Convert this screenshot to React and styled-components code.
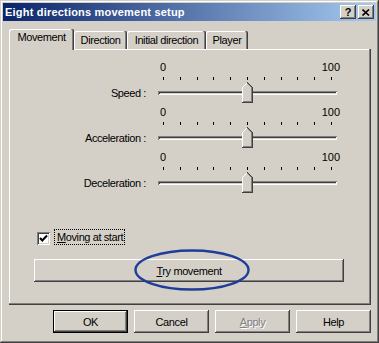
import styled, { createGlobalStyle } from "styled-components";

const face = "#d4d0c8";

const Global = createGlobalStyle`
  html, body { margin: 0; padding: 0; background: ${face}; }
  body {
    font-family: "Liberation Sans", Arial, sans-serif;
    font-size: 11px;
    letter-spacing: -0.4px;
    color: #000;
  }
`;

const Window = styled.div`
  position: relative;
  width: 379px;
  height: 343px;
  box-sizing: border-box;
  padding: 3px;
  background: ${face};
  box-shadow: inset -1px -1px #404040, inset 1px 1px ${face},
    inset -2px -2px #808080, inset 2px 2px #fff;
`;

const TitleBar = styled.div`
  display: flex;
  align-items: center;
  height: 18px;
  padding: 0 2px 0 2px;
  background: linear-gradient(to right, #0a246a, #a6caf0);
`;

const Title = styled.div`
  flex: 1;
  color: #fff;
  font-weight: bold;
  letter-spacing: 0.2px;
  line-height: 13px;
`;

const CaptionButtons = styled.div`
  display: flex;
  gap: 2px;
`;

const CaptionButton = styled.div`
  width: 16px;
  height: 14px;
  box-sizing: border-box;
  display: flex;
  align-items: center;
  justify-content: center;
  background: ${face};
  font-weight: bold;
  font-size: 11px;
  letter-spacing: 0;
  line-height: 12px;
  box-shadow: inset -1px -1px #404040, inset 1px 1px #fff,
    inset -2px -2px #808080, inset 2px 2px ${face};
`;

const Body = styled.div`
  padding: 8px 5px 0 6px;
`;

const TabStrip = styled.div`
  display: flex;
  align-items: flex-end;
  height: 20px;
`;

const Tab = styled.div`
  position: relative;
  z-index: ${(p) => (p.$active ? 2 : 1)};
  width: ${(p) => p.$w}px;
  height: ${(p) => (p.$active ? 21 : 18)}px;
  margin-bottom: ${(p) => (p.$active ? -1 : 0)}px;
  box-sizing: border-box;
  padding-top: ${(p) => (p.$active ? 2 : 3)}px;
  text-align: center;
  line-height: 13px;
  background: ${face};
  border-radius: 2px 2px 0 0;
  box-shadow: inset -1px 0 #404040, inset -2px 0 #808080, inset 1px 1px #fff;
`;

const Panel = styled.div`
  position: relative;
  width: 362px;
  height: 256px;
  box-sizing: border-box;
  padding-top: 12px;
  display: flex;
  flex-direction: column;
  background: ${face};
  box-shadow: inset -1px -1px #404040, inset -2px -2px #808080,
    inset 1px 1px #fff;
`;

const SliderRow = styled.div`
  display: flex;
  height: 45px;
`;

const RowLabel = styled.div`
  width: 137px;
  margin-right: 12px;
  padding-top: 26px;
  text-align: right;
  line-height: 13px;
`;

const Slider = styled.div`
  position: relative;
  width: 179px;
`;

const Scale = styled.div`
  display: flex;
  justify-content: space-between;
  height: 13px;
  line-height: 13px;
  margin: 0 -3px 0 2px;
  letter-spacing: 0;
`;

const Ticks = styled.div`
  display: flex;
  justify-content: space-between;
  height: 3px;
  margin-top: 3px;
  padding: 0 5px;
`;

const Tick = styled.span`
  width: 1px;
  height: 3px;
  background: #000;
`;

const Track = styled.div`
  height: 4px;
  margin-top: 11px;
  box-shadow: inset 1px 1px #808080, inset -1px -1px #fff,
    inset 2px 2px #404040, inset -2px -2px ${face};
`;

const ThumbWrap = styled.svg`
  position: absolute;
  left: 84px;
  top: 21px;
`;

const CheckRow = styled.div`
  display: flex;
  align-items: flex-end;
  height: 16px;
  margin-top: 33px;
  padding-left: 28px;
`;

const CheckBox = styled.div`
  width: 13px;
  height: 13px;
  margin-right: 4px;
  background: #fff;
  box-shadow: inset 1px 1px #808080, inset -1px -1px #fff,
    inset 2px 2px #404040, inset -2px -2px ${face};
  display: flex;
  align-items: center;
  justify-content: center;
`;

const CheckLabel = styled.div`
  height: 16px;
  box-sizing: border-box;
  border: 1px dotted #000;
  padding: 0 1px 0 2px;
  line-height: 14px;
`;

const Button = styled.button`
  position: relative;
  width: ${(p) => p.$w || 75}px;
  height: 23px;
  padding: 0;
  border: 0;
  background: ${face};
  font: inherit;
  letter-spacing: inherit;
  color: ${(p) => (p.disabled ? "#808080" : "#000")};
  text-shadow: ${(p) => (p.disabled ? "1px 1px #fff" : "none")};
  box-shadow: ${(p) =>
    p.$default
      ? `inset 0 0 0 1px #000, inset -2px -2px #404040, inset 2px 2px #fff, inset -3px -3px #808080`
      : `inset -1px -1px #404040, inset 1px 1px #fff, inset -2px -2px #808080, inset 2px 2px ${face}`};
`;

const TryButton = styled(Button)`
  margin: 14px 0 0 25px;
`;

const Highlight = styled.svg`
  position: absolute;
  left: 100px;
  top: -10px;
  overflow: visible;
  pointer-events: none;
`;

const ButtonRow = styled.div`
  display: flex;
  justify-content: flex-end;
  gap: 6px;
  margin-top: 5px;
`;

const Thumb = () => (
  <ThumbWrap width="11" height="21" viewBox="0 0 11 21" shapeRendering="crispEdges">
    <polygon points="5.5,0 0,5.5 0,21 11,21 11,5.5" fill={face} />
    <polyline points="0.5,20 0.5,5.5 5.5,0.5" fill="none" stroke="#fff" />
    <polyline points="5.5,1.5 9.5,5.5 9.5,19.5 1,19.5" fill="none" stroke="#808080" />
    <polyline points="5.5,0.5 10.5,5.5 10.5,20.5 0,20.5" fill="none" stroke="#404040" />
  </ThumbWrap>
);

const ticks = Array.from({ length: 11 });

const sliders = ["Speed :", "Acceleration :", "Deceleration :"];

export default function App() {
  return (
    <>
      <Global />
      <Window>
        <TitleBar>
          <Title>Eight directions movement setup</Title>
          <CaptionButtons>
            <CaptionButton>?</CaptionButton>
            <CaptionButton>
              <svg width="8" height="7" viewBox="0 0 8 7">
                <path d="M0.5 0.5 L7 6.5 M7 0.5 L0.5 6.5" stroke="#000" strokeWidth="1.6" />
              </svg>
            </CaptionButton>
          </CaptionButtons>
        </TitleBar>
        <Body>
          <TabStrip>
            <Tab $active $w={65}>Movement</Tab>
            <Tab $w={53}>Direction</Tab>
            <Tab $w={79}>Initial direction</Tab>
            <Tab $w={42}>Player</Tab>
          </TabStrip>
          <Panel>
            {sliders.map((label) => (
              <SliderRow key={label}>
                <RowLabel>{label}</RowLabel>
                <Slider>
                  <Scale>
                    <span>0</span>
                    <span>100</span>
                  </Scale>
                  <Ticks>
                    {ticks.map((_, i) => (
                      <Tick key={i} />
                    ))}
                  </Ticks>
                  <Track />
                  <Thumb />
                </Slider>
              </SliderRow>
            ))}
            <CheckRow>
              <CheckBox>
                <svg width="9" height="9" viewBox="0 0 9 9">
                  <polyline points="1,4 3.3,6.5 8,1.5" fill="none" stroke="#000" strokeWidth="2" />
                </svg>
              </CheckBox>
              <CheckLabel>
                <u>M</u>oving at start
              </CheckLabel>
            </CheckRow>
            <TryButton $w={310}>
              <u>T</u>ry movement
              <Highlight width="116" height="42" viewBox="0 0 116 42">
                <ellipse cx="58" cy="21" rx="56.5" ry="19.5" fill="none" stroke="#1f3d99" strokeWidth="2.4" />
              </Highlight>
            </TryButton>
          </Panel>
          <ButtonRow>
            <Button $default>OK</Button>
            <Button>Cancel</Button>
            <Button disabled>
              <u>A</u>pply
            </Button>
            <Button>Help</Button>
          </ButtonRow>
        </Body>
      </Window>
    </>
  );
}
